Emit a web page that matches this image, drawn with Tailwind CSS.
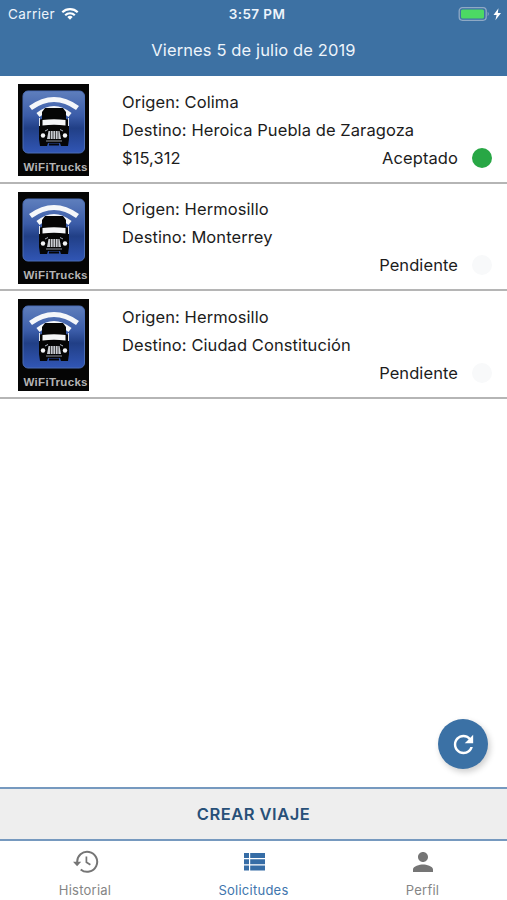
<!DOCTYPE html>
<html lang="es">
<head>
    <meta charset="UTF-8">
    <meta name="viewport" content="width=device-width, initial-scale=1.0">
    <title>WiFiTrucks</title>
    <script src="https://cdn.jsdelivr.net/npm/@tailwindcss/browser@4"></script>
</head>
<body class="relative h-[900px] flex flex-col overflow-hidden bg-white text-[#1c1c1c] font-['Inter',sans-serif]">

<header class="h-[76px] shrink-0 bg-[#3d71a3] text-[#edf4fb]">
    <div class="h-7 pl-2 pr-[5px] grid grid-cols-3 items-center">
        <div class="flex items-center gap-1.5 text-[13.5px]">
            <span class="tracking-[0.4px]">Carrier</span>
            <svg class="w-[18px] h-[13px] -mt-0.5" viewBox="0 0 18 13" fill="none" stroke="white" stroke-width="2.2">
                <path d="M1.3 5.2a11 11 0 0 1 15.4 0M4.2 8.2a6.9 6.9 0 0 1 9.6 0"/>
                <path d="M6.3 10.1a3.9 3.9 0 0 1 5.4 0L9 12.8z" fill="white" stroke="none"/>
            </svg>
        </div>
        <div class="pl-1 text-center text-[13.5px] font-semibold tracking-[0.4px]">3:57 PM</div>
        <svg class="w-[44px] h-4 -mt-px justify-self-end" viewBox="0 0 44 16">
            <rect x="1.2" y="1.7" width="27" height="12.6" rx="3.2" fill="none" stroke="#8fa9c5" stroke-width="1.3"/>
            <rect x="3" y="3.5" width="23" height="9" rx="1.5" fill="#4cd964"/>
            <path d="M29.7 5.8q2.2 2.1 0 4.4z" fill="#8fa9c5"/>
            <path d="M40.5 2.3 35.5 9h3.1l-1.2 5.2L43 7h-3.2z" fill="white"/>
        </svg>
    </div>
    <h1 class="h-[45px] text-center text-[16.5px] leading-[45px] tracking-[0.12px]">Viernes 5 de julio de 2019</h1>
</header>

<main id="requestList" class="flex-1"></main>

<button class="absolute left-[438px] top-[719px] size-[50px] rounded-full bg-[#3b71a5] shadow-[2px_3px_6px_rgba(0,0,0,0.2)] flex items-center justify-center" aria-label="Actualizar">
    <svg class="size-[29px]" viewBox="0 0 24 24" fill="white">
        <path d="M17.65 6.35C16.2 4.9 14.21 4 12 4c-4.42 0-7.99 3.58-7.99 8s3.57 8 7.99 8c3.73 0 6.84-2.55 7.73-6h-2.08c-.82 2.33-3.04 4-5.65 4-3.31 0-6-2.69-6-6s2.69-6 6-6c1.66 0 3.14.69 4.22 1.78L13 11h7V4l-2.35 2.35z"/>
    </svg>
</button>

<button class="h-[54px] shrink-0 border-y-2 border-[#7699bf] bg-[#eeeeee] text-[16.5px] font-semibold tracking-[0.5px] text-[#285078]">CREAR VIAJE</button>

<nav class="h-[59px] shrink-0 grid grid-cols-3 text-[13px] tracking-[0.25px] text-[#858585]">
    <a class="flex flex-col items-center pt-[7px]" href="#">
        <svg class="size-7" viewBox="0 0 28 28" fill="none" stroke="#757575" stroke-width="2">
            <path d="M6.2 14.500A10 10 0 1 1 9.700 21.400"/>
            <path d="M2 13.800h8.200L6.100 18.300z" fill="#757575" stroke="none"/>
            <path d="M15.400 8.500v5.700l4 2.600" stroke-width="1.700"/>
        </svg>
        <span class="mt-[5px] pl-px">Historial</span>
    </a>
    <a class="flex flex-col items-center pt-[7px] text-[#4076ad]" href="#">
        <svg class="size-7" viewBox="0 0 28 28" fill="#366da6">
            <path d="M4 5h5v5H4zM10.2 5H25v5H10.2zM4 11.2h5v5H4zM10.2 11.2H25v5H10.2zM4 17.4h5v5H4zM10.2 17.4H25v5H10.2z"/>
        </svg>
        <span class="mt-[5px]">Solicitudes</span>
    </a>
    <a class="flex flex-col items-center pt-[7px]" href="#">
        <svg class="size-[30px] -mt-px -mb-px" viewBox="0 0 24 24" fill="#757575">
            <path d="M12 12c2.21 0 4-1.79 4-4s-1.79-4-4-4-4 1.79-4 4 1.79 4 4 4zm0 2c-2.67 0-8 1.34-8 4v2h16v-2c0-2.66-5.33-4-8-4z"/>
        </svg>
        <span class="mt-[5px]">Perfil</span>
    </a>
</nav>

<script>
    const requests = [
        { id: 1, origin: "Colima", destination: "Heroica Puebla de Zaragoza", price: "$15,312", status: "Aceptado", dot: "bg-[#28a745]" },
        { id: 2, origin: "Hermosillo", destination: "Monterrey", price: "", status: "Pendiente", dot: "bg-[#f8f9fa]" },
        { id: 3, origin: "Hermosillo", destination: "Ciudad Constitución", price: "", status: "Pendiente", dot: "bg-[#f8f9fa]" }
    ];

    function logo(id) {
        return `
            <svg class="w-[71px] h-[92px] mt-2 shrink-0" viewBox="0 0 71 92">
                <linearGradient id="blue${id}" x1="0" y1="0" x2="0" y2="1">
                    <stop offset="0" stop-color="#5f7fbd"/>
                    <stop offset=".4" stop-color="#3b5ca8"/>
                    <stop offset=".6" stop-color="#213f86"/>
                    <stop offset="1" stop-color="#3156b5"/>
                </linearGradient>
                <rect width="71" height="92" fill="#050505"/>
                <rect x="5" y="7" width="61.5" height="62" rx="5" fill="url(#blue${id})" stroke="#4b6db5" stroke-width="1"/>
                <!-- wifi waves -->
                <path d="M12.500 24Q36 7 59.500 24" fill="none" stroke="#f5f7fa" stroke-width="5"/>
                <path d="M20 31Q36 18 52 31" fill="none" stroke="#f5f7fa" stroke-width="5"/>
                <!-- truck -->
                <path d="M27 24h18l3 4v7l3 1v19l-1 7h-7l-1-3H30l-1 3h-7l-1-7V36l3-1v-7z" fill="#050505"/>
                <path d="M24.500 36q11.500-1.500 23 0v5.500q-11.500-1.500-23 0z" fill="#f4f5f7"/>
                <path d="M21.500 34v8M50.500 34v8" stroke="#dfe3ea" stroke-width="1"/>
                <path d="M27 47l3-1.500M45 47l-3-1.500" stroke="#aab1bd" stroke-width="1"/>
                <path d="M30.500 47h11l1.500 8H29z" fill="#c9ccd1"/>
                <path d="M32.500 47v8M35 47v8M37.500 47v8M40 47v8" stroke="#222" stroke-width=".8"/>
                <circle cx="25" cy="51.500" r="2.200" fill="#f4f5f7"/>
                <circle cx="47" cy="51.500" r="2.200" fill="#f4f5f7"/>
                <path d="M28 57h16" stroke="#8f949c" stroke-width="1"/>
                <path d="M31 60.500h10" stroke="#050505" stroke-width="2"/>
                <text x="5.500" y="87" textLength="64" fill="#b4b4b4" font-family="Liberation Sans" font-size="11.500" font-weight="bold">WiFiTrucks</text>
            </svg>
        `;
    }

    document.getElementById("requestList").innerHTML = requests.map(item => `
        <div class="h-[107.6px] flex items-start border-b-2 border-[#b5b5b5] pl-[18px] pr-[15px]">
            ${logo(item.id)}
            <div class="ml-[33px] mt-[11.7px] flex-1 text-[16.5px] tracking-[0.08px] leading-7">
                <p>Origen: ${item.origin}</p>
                <p>Destino: ${item.destination}</p>
                <div class="flex items-center h-7">
                    <span>${item.price}</span>
                    <span class="ml-auto">${item.status}</span>
                    <span class="ml-3.5 size-5 rounded-full ${item.dot}"></span>
                </div>
            </div>
        </div>
    `).join("");
</script>
</body>
</html>
